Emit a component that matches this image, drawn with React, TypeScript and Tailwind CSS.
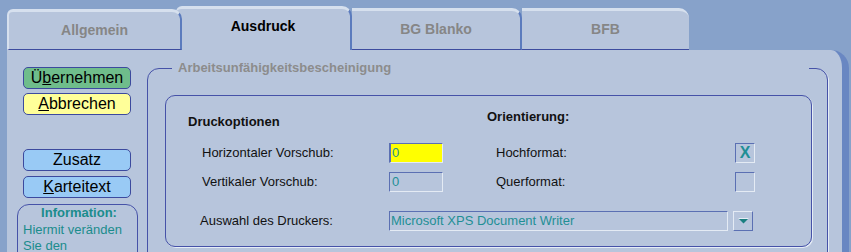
const TABS = [
  { label: "Allgemein", cls: "relative z-10 w-[175px] h-[41px] border-l-2 border-r-2 border-b border-b-[#3d4c9f] rounded-tl-[6px]", text: "text-[#868686]" },
  { label: "Ausdruck", cls: "-ml-[6px] w-[176px] h-[44px] border-r-2 rounded-tl-[6px]", text: "text-black pb-[6px]" },
  { label: "BG Blanko", cls: "w-[170px] h-[42px] border-r-2 border-b border-b-[#3d4c9f]", text: "text-[#868686] pb-[2px]" },
  { label: "BFB", cls: "w-[167px] h-[42px] border-b border-b-[#3d4c9f]", text: "text-[#868686] pb-[2px]" },
];

const Btn = ({ bg, className, children }: { bg: string; className: string; children: React.ReactNode }) => (
  <div
    className={`ml-[6px] w-[108px] h-[22px] rounded-[5px] border border-[#3c4a9e] ${bg} ${className} flex items-center justify-center text-[16px] leading-[20px] text-black`}
  >
    {children}
  </div>
);

const Sunken = ({ className, children }: { className: string; children?: React.ReactNode }) => (
  <div
    className={`h-[20px] border-t border-l border-t-[#5b70b3] border-l-[#5b70b3] border-b border-r border-b-[#e4ebf4] border-r-[#e4ebf4] flex items-center pl-[1px] text-[13px] text-[#1f8f95] ${className}`}
  >
    {children}
  </div>
);

export default function App() {
  return (
    <div className="w-[851px] h-[252px] overflow-hidden bg-[#87a2ca] font-['Liberation_Sans',Arial,sans-serif]">
      {/* tabs */}
      <div className="flex items-end h-[50px] pl-[7px]">
        {TABS.map((t) => (
          <div
            key={t.label}
            className={`${t.cls} bg-[#b7c5dc] border-t-[3px] border-t-[#d6e0ee] border-l-[#d6e0ee] border-r-[#5b7bbd] rounded-tr-[10px] flex items-center justify-center`}
          >
            <span className={`text-[14px] font-bold ${t.text}`}>{t.label}</span>
          </div>
        ))}
      </div>

      {/* panel */}
      <div className="ml-[7px] w-[842px] h-[202px] bg-[#b7c5dc] border-r-[7px] border-r-[#6987c2] rounded-tr-[18px] flex pl-[10px] overflow-hidden">
        {/* left column */}
        <div className="w-[121px] shrink-0 pt-[17px]">
          <Btn bg="bg-[#6fbd8b]" className="">
            Ü<span className="underline">b</span>ernehmen
          </Btn>
          <Btn bg="bg-[#ffff99]" className="mt-[4px]">
            <span className="underline">A</span>bbrechen
          </Btn>
          <Btn bg="bg-[#99caf5]" className="mt-[34px]">
            Zusatz
          </Btn>
          <Btn bg="bg-[#99caf5]" className="mt-[5px]">
            <span className="underline">K</span>arteitext
          </Btn>
          <div className="mt-[6px] w-[121px] h-[80px] rounded-[12px] border border-[#4652a8] pl-[5px] text-[13px] leading-[16.5px] text-[#1b8c8c]">
            <div className="font-bold text-center pr-[2px]">Information:</div>
            <div>Hiermit veränden</div>
            <div>Sie den</div>
          </div>
        </div>

        {/* group box */}
        <fieldset className="ml-[9px] mt-[10px] w-[681px] h-[220px] shrink-0 border border-[#4652a8] rounded-[12px] pl-[17px] pt-[19px] shadow-[1px_1px_0_#e6edf6]">
          <legend className="ml-[7px] w-[637px] pl-[6px] bg-[#b7c5dc] text-[13px] leading-[16px] font-bold text-[#8c8c8c]">
            Arbeitsunfähigkeitsbescheinigung
          </legend>

          <div className="w-[647px] h-[152px] border border-[#4652a8] rounded-[10px] shadow-[1px_1px_0_#e6edf6] pl-[22px] text-[13px] text-[#111]">
            {/* headers */}
            <div className="flex h-[47px] font-bold">
              <div className="w-[299px] mt-[18px] leading-[15px]">Druckoptionen</div>
              <div className="mt-[13px] leading-[15px]">Orientierung:</div>
            </div>

            {/* row 1 */}
            <div className="flex items-center h-[20px] ml-[14px]">
              <div className="w-[187px]">Horizontaler Vorschub:</div>
              <Sunken className="w-[54px] bg-[#ffff00] border-l-2 border-l-[#1c2ec8]">0</Sunken>
              <div className="w-[53px]" />
              <div className="w-[239px]">Hochformat:</div>
              <Sunken className="w-[20px] justify-center !pl-0 font-bold text-[16px] text-[#1a8a8a]">X</Sunken>
            </div>

            {/* row 2 */}
            <div className="flex items-center h-[20px] ml-[14px] mt-[9px]">
              <div className="w-[187px]">Vertikaler Vorschub:</div>
              <Sunken className="w-[54px] pl-[2px]">0</Sunken>
              <div className="w-[53px]" />
              <div className="w-[239px]">Querformat:</div>
              <Sunken className="w-[20px]" />
            </div>

            {/* row 3 */}
            <div className="flex items-center h-[20px] ml-[12px] mt-[19px]">
              <div className="w-[189px]">Auswahl des Druckers:</div>
              <Sunken className="w-[339px]">Microsoft XPS Document Writer</Sunken>
              <div className="ml-[5px] w-[20px] h-[20px] border-t border-l border-t-[#e4ebf4] border-l-[#e4ebf4] border-b border-r border-b-[#5b70b3] border-r-[#5b70b3] flex items-center justify-center">
                <svg width="11" height="6" viewBox="0 0 11 6">
                  <polygon points="0.5,0.5 10.5,0.5 5.5,5.5" fill="#1a7f80" />
                  <line x1="0.5" y1="0.5" x2="10.5" y2="0.5" stroke="#e6eef7" strokeWidth="1" />
                </svg>
              </div>
            </div>
          </div>
        </fieldset>
      </div>
    </div>
  );
}
